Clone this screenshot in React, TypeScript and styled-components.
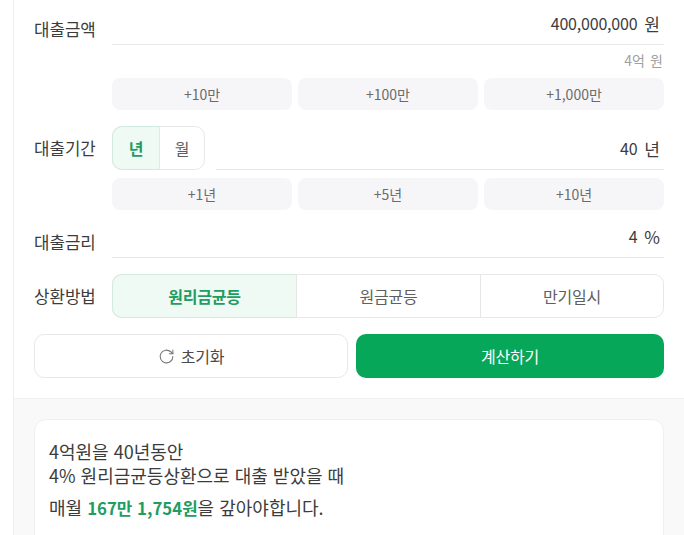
import React from "react";
import styled, { createGlobalStyle } from "styled-components";

const Global = createGlobalStyle`
  html, body { margin: 0; padding: 0; background: #fff; height: 535px; overflow: hidden; }
  body { font-family: "Noto Sans CJK KR", "Noto Sans", sans-serif; color: #333; }
  * { box-sizing: border-box; }
`;
const Page = styled.div`
  margin-left: 13px;
  height: 535px;
  border-left: 1px solid #eeeeee;
  overflow: hidden;
`;
const Form = styled.div`
  display: flex;
  flex-direction: column;
  padding: 14px 20px 20px;
`;
const Field = styled.div<{ $mt?: number }>`
  display: flex;
  align-items: center;
  margin-top: ${(p) => p.$mt ?? 0}px;
`;
const Label = styled.div`
  width: 78px;
  flex: none;
  font-size: 16.8px;
  line-height: 22px;
  padding-bottom: 1px;
  color: #3c3c3c;
  white-space: nowrap;
`;
const InputLine = styled.div<{ $ml?: number; $end?: boolean }>`
  flex: 1;
  height: 31px;
  margin-left: ${(p) => p.$ml ?? 0}px;
  align-self: ${(p) => (p.$end ? "flex-end" : "auto")};
  border-bottom: 1px solid #e8e8e8;
  display: flex;
  justify-content: flex-end;
  align-items: center;
  gap: 7px;
  padding: 0 4px 12px 0;
  font-size: 16px;
  letter-spacing: -0.2px;
  color: #3c3c3c;
`;
const Unit = styled.span`
  font-size: 17px;
  letter-spacing: 0;
`;
const Hint = styled.div`
  height: 33px;
  padding: 5px 1px 0 0;
  text-align: right;
  font-size: 14px;
  line-height: 20px;
  color: #a0a0a0;
  word-spacing: 2px;
`;
const Chips = styled.div<{ $mt?: number }>`
  display: grid;
  grid-template-columns: repeat(3, 1fr);
  gap: 6px;
  margin-left: 78px;
  margin-top: ${(p) => p.$mt ?? 0}px;
`;
const Chip = styled.button`
  height: 32px;
  border: 0;
  border-radius: 8px;
  background: #f6f6f8;
  font: inherit;
  font-size: 14px;
  color: #6b6b6b;
  padding: 0;
`;
const Segment = styled.div<{ $grow?: boolean }>`
  display: flex;
  height: 44px;
  flex: ${(p) => (p.$grow ? 1 : "none")};
  border: 1px solid #e8e8e8;
  border-radius: 10px;
`;
const SegItem = styled.div<{ $active?: boolean; $w?: number }>`
  flex: ${(p) => (p.$w ? `0 0 ${p.$w}px` : 1)};
  display: flex;
  align-items: center;
  justify-content: center;
  font-size: 16px;
  letter-spacing: -0.2px;
  font-weight: ${(p) => (p.$active ? 700 : 400)};
  color: ${(p) => (p.$active ? "#1f9d62" : "#5f5f5f")};
  background: ${(p) => (p.$active ? "#f0faf5" : "transparent")};
  & + & { border-left: 1px solid #e6e6e6; }
  ${(p) =>
    p.$active
      ? `margin: -1px 0 -1px -1px;
         border: 1px solid #d2eadf;
         border-right: 0;
         border-radius: 10px 0 0 10px;
         & + * { border-left-color: #d2eadf; }`
      : ""}
`;
const Actions = styled.div`
  display: flex;
  gap: 8px;
  margin-top: 16px;
`;
const ResetButton = styled.button`
  flex: 0 0 314px;
  height: 44px;
  border: 1px solid #e8e8e8;
  border-radius: 10px;
  background: #fff;
  font: inherit;
  font-size: 16px;
  letter-spacing: -0.2px;
  color: #4a4a4a;
  display: flex;
  align-items: center;
  justify-content: center;
  gap: 6px;
  padding: 0;
`;
const CalcButton = styled.button`
  flex: 1;
  height: 44px;
  border: 0;
  border-radius: 10px;
  background: #06a759;
  font: inherit;
  font-size: 16px;
  letter-spacing: -0.2px;
  font-weight: 400;
  color: #fff;
  padding: 0;
`;
const ResultArea = styled.div`
  border-top: 1px solid #f0f0f0;
  background: #f9f9f9;
  padding: 20px 20px 0;
  height: 140px;
`;
const Card = styled.div`
  background: #fff;
  border: 1px solid #f0f0f0;
  border-radius: 12px;
  padding: 19px 14px;
  height: 200px;
  font-size: 18px;
  word-spacing: 1px;
  color: #3c3c3c;
`;
const Line = styled.div<{ $mt?: number }>`
  line-height: 24px;
  margin-top: ${(p) => p.$mt ?? 0}px;
  white-space: nowrap;
`;
const Strong = styled.strong`
  color: #1f9d62;
  font-size: 16.8px;
  font-weight: 700;
`;

export default function App() {
  return (
    <>
      <Global />
      <Page>
        <Form>
          <Field>
            <Label>대출금액</Label>
            <InputLine>
              <span>400,000,000</span>
              <Unit>원</Unit>
            </InputLine>
          </Field>
          <Hint>4억 원</Hint>
          <Chips>
            <Chip>+10만</Chip>
            <Chip>+100만</Chip>
            <Chip>+1,000만</Chip>
          </Chips>
          <Field $mt={16}>
            <Label>대출기간</Label>
            <Segment>
              <SegItem $active $w={47}>년</SegItem>
              <SegItem $w={45}>월</SegItem>
            </Segment>
            <InputLine $ml={11} $end>
              <span>40</span>
              <Unit>년</Unit>
            </InputLine>
          </Field>
          <Chips $mt={8}>
            <Chip>+1년</Chip>
            <Chip>+5년</Chip>
            <Chip>+10년</Chip>
          </Chips>
          <Field $mt={17}>
            <Label>대출금리</Label>
            <InputLine>
              <span>4</span>
              <Unit>%</Unit>
            </InputLine>
          </Field>
          <Field $mt={16}>
            <Label>상환방법</Label>
            <Segment $grow>
              <SegItem $active $w={184}>원리금균등</SegItem>
              <SegItem $w={184}>원금균등</SegItem>
              <SegItem>만기일시</SegItem>
            </Segment>
          </Field>
          <Actions>
            <ResetButton>
              <svg width="17" height="17" viewBox="0 0 24 24" fill="none" stroke="#777" strokeWidth="1.5" strokeLinecap="round" strokeLinejoin="round">
                <path d="M21 12a9 9 0 1 1-3-6.7L21 8" />
                <path d="M21 3v5h-5" />
              </svg>
              초기화
            </ResetButton>
            <CalcButton>계산하기</CalcButton>
          </Actions>
        </Form>
        <ResultArea>
          <Card>
            <Line>4억원을 40년동안</Line>
            <Line>4% 원리금균등상환으로 대출 받았을 때</Line>
            <Line $mt={8}>
              매월 <Strong>167만 1,754원</Strong>을 갚아야합니다.
            </Line>
          </Card>
        </ResultArea>
      </Page>
    </>
  );
}
